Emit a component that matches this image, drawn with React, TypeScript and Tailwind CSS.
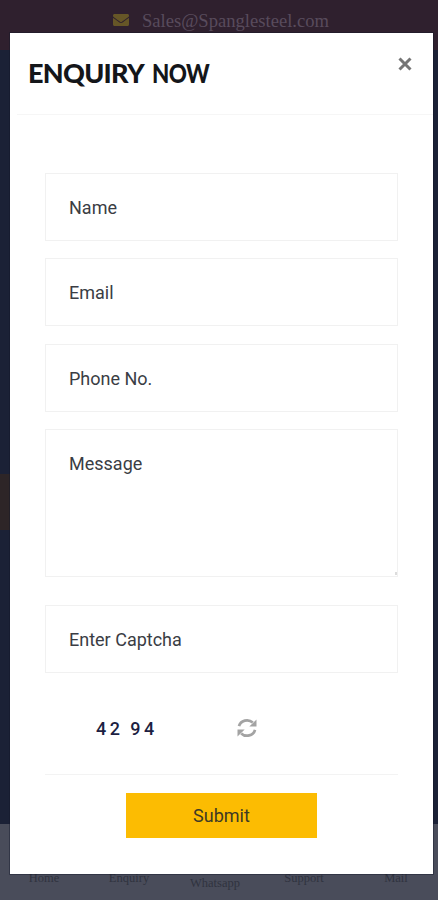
import { useState } from "react";
import { FaEnvelope } from "react-icons/fa";

const fieldClass =
  "block w-full rounded-none border border-[#f1f1f1] bg-white pr-6 pl-[23px] font-['Roboto',sans-serif] text-[18px] text-[#3a3d44] placeholder-[#3a3d44] focus:outline-none";

interface TextFieldProps {
  name: string;
  placeholder: string;
  type?: "text" | "email" | "tel";
  className?: string;
}

function TextField({ name, placeholder, type = "text", className = "" }: TextFieldProps) {
  return (
    <input
      type={type}
      name={name}
      placeholder={placeholder}
      aria-label={placeholder}
      className={`${fieldClass} h-[68px] ${className}`}
    />
  );
}

function RefreshIcon() {
  return (
    <svg width="20" height="20" viewBox="0 0 20 20" fill="none" aria-hidden="true">
      <path d="M2 8.200A8.200 7.600 0 0 1 15.800 4.600M18 11.800A8.200 7.600 0 0 1 4.200 15.400" stroke="currentColor" strokeWidth="2.700" />
      <path d="M19.500 1.500V8.600H12.300ZM.5 18.500V11.400H7.700Z" fill="currentColor" />
    </svg>
  );
}

const navItems = [
  { label: "Home", className: "w-[88px]" },
  { label: "Enquiry", className: "w-[82px]" },
  { label: "Whatsapp", className: "w-[90px] pt-[5px]" },
  { label: "Support", className: "w-[88px]" },
  { label: "Mail", className: "w-[90px] pl-[6px]" },
];

function PageBehind() {
  return (
    <div className="flex h-full flex-col bg-[#1b2136] font-['Liberation_Serif',serif]">
      <header className="flex h-[50px] shrink-0 items-start bg-[#2f202e] pt-[10px] pl-[113px]">
        <FaEnvelope className="mt-[2px] h-4 w-4 text-[#665627]" />
        <span className="ml-[13px] text-[18.6px] leading-[22px] whitespace-nowrap text-[#584b5c]">
          Sales@Spanglesteel.com
        </span>
      </header>
      <div className="flex-1">
        <div className="mt-[424px] h-[56px] w-5 bg-[#2d2527]" />
      </div>
      <nav className="flex h-[76px] shrink-0 bg-[#494c5a] pt-[48px] text-[12.500px] leading-[12px] text-[#30333f]">
        {navItems.map((item) => (
          <span key={item.label} className={`text-center ${item.className}`}>
            {item.label}
          </span>
        ))}
      </nav>
    </div>
  );
}

export default function App() {
  const [captcha, setCaptcha] = useState("42 94");

  const refreshCaptcha = () => {
    const digits = String(Math.floor(1000 + Math.random() * 9000));
    setCaptcha(`${digits.slice(0, 2)} ${digits.slice(2)}`);
  };

  return (
    <div className="relative h-[900px] w-[438px] overflow-hidden">
      <PageBehind />

      <div
        role="dialog"
        className="absolute top-[33px] left-[10px] flex h-[841px] w-[423px] flex-col bg-white font-['Roboto',sans-serif] shadow-[0_0_0_1px_#11172966]"
      >
        <div className="ml-[7px] flex h-[82px] shrink-0 items-start justify-between border-b border-[#f6f6f6] pr-[20px] pl-[11px]">
          <h2 className="mt-[26px] w-[190px] font-['Lato',sans-serif] text-[27px] leading-[28px] font-black tracking-[-0.7px] whitespace-nowrap text-[#14161a]">
            ENQUIRY{" "}
            <span className="ml-[3px] inline-block origin-left scale-x-[0.83]">NOW</span>
          </h2>
          <button type="button" aria-label="Close" className="mt-[23px] text-[#757575]">
            <svg width="16" height="16" viewBox="0 0 16 16" stroke="currentColor" strokeWidth="3" aria-hidden="true">
              <path d="M2.500 2.500 13.500 13.500M13.500 2.500 2.500 13.500" />
            </svg>
          </button>
        </div>

        <form className="flex flex-col px-[35px] pt-[58px]" onSubmit={(e) => e.preventDefault()}>
          <TextField name="name" placeholder="Name" />
          <TextField name="email" placeholder="Email" type="email" className="mt-[17px]" />
          <TextField name="phone" placeholder="Phone No." type="tel" className="mt-[18px]" />
          <div className="relative mt-[17px]">
            <textarea
              name="message"
              placeholder="Message"
              aria-label="Message"
              className={`${fieldClass} h-[148px] resize-none pt-[20px]`}
            />
            <span className="absolute right-px bottom-[2px] h-[3px] w-[2px] bg-[#dcdcdc]" />
          </div>
          <TextField name="captcha" placeholder="Enter Captcha" className="mt-[28px]" />

          <div className="flex h-[102px] items-center border-b border-[#f3f3f3] pt-[9px] pl-[51px]">
            <span className="w-[141px] text-[18px] font-medium tracking-[3.6px] [word-spacing:-1.5px] whitespace-nowrap text-[#1d1f42]">
              {captcha}
            </span>
            <button type="button" aria-label="Refresh" onClick={refreshCaptcha} className="text-[#a3a3a3]">
              <RefreshIcon />
            </button>
          </div>

          <button
            type="submit"
            className="mt-[18px] ml-[81px] h-[45px] w-[191px] bg-[#fcbc02] pb-px text-[18px] text-[#3d3a25]"
          >
            Submit
          </button>
        </form>
      </div>
    </div>
  );
}
